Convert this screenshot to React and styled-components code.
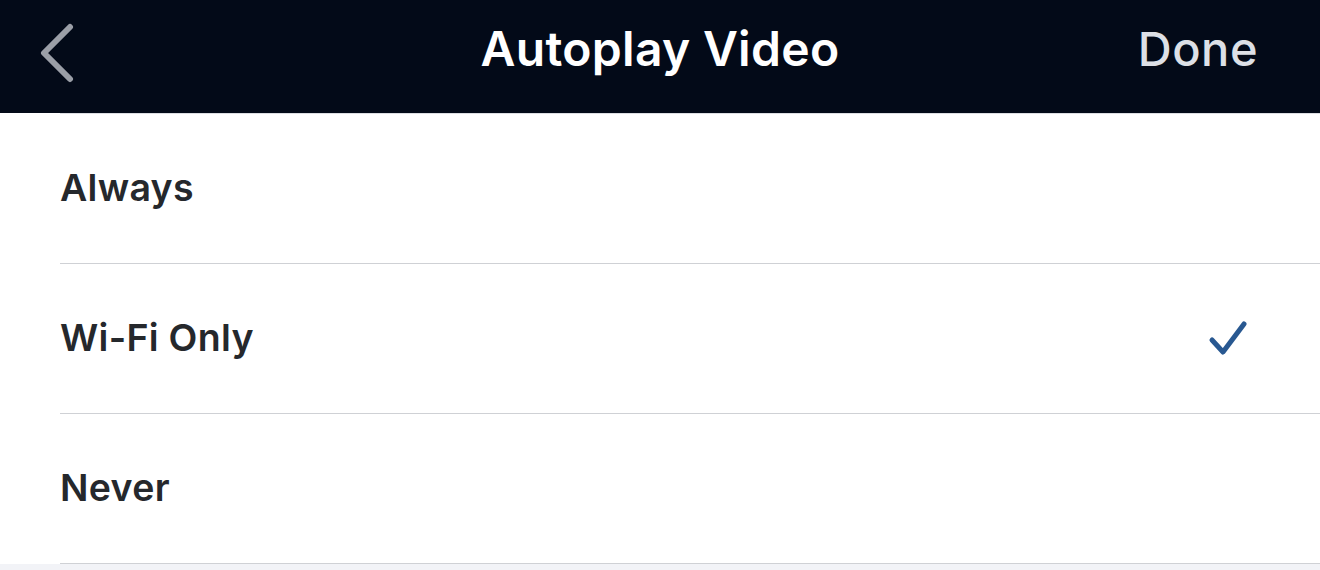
import * as React from "react";
import styled, { createGlobalStyle } from "styled-components";

const GlobalStyle = createGlobalStyle`
  html, body {
    margin: 0;
    padding: 0;
    background: #f2f3f7;
    font-family: "Inter", "Liberation Sans", sans-serif;
  }
`;

const Screen = styled.div`
  width: 1320px;
  height: 570px;
  display: flex;
  flex-direction: column;
  background: #f2f3f7;
  overflow: hidden;
`;

const NavBar = styled.div`
  height: 113px;
  background: #030a18;
  display: grid;
  grid-template-columns: 1fr auto 1fr;
  align-items: center;
  padding: 0 62px 0 40px;
  flex-shrink: 0;
`;

const BackButton = styled.button`
  justify-self: start;
  background: none;
  border: 0;
  padding: 0;
  width: 36px;
  height: 60px;
  display: flex;
  align-items: center;
  cursor: pointer;
  margin-top: -8px;
`;

const Title = styled.h1`
  margin: 0;
  color: #ffffff;
  font-size: 48px;
  font-weight: 600;
  letter-spacing: 0.3px;
  margin-top: -16px;
  margin-left: 22px;
`;

const DoneButton = styled.button`
  justify-self: end;
  background: none;
  border: 0;
  padding: 0;
  color: #dde0e6;
  font-family: inherit;
  font-size: 47px;
  font-weight: 500;
  letter-spacing: 0.5px;
  margin-top: -16px;
  cursor: pointer;
`;

const List = styled.div`
  background: #ffffff;
  display: flex;
  flex-direction: column;
`;

const Row = styled.div`
  height: 149px;
  margin-left: 60px;
  padding-right: 70px;
  border-top: ${(p) => (p.$first ? "1px solid #dcdee2" : "0")};
  border-bottom: 1px solid #cfd1d5;
  display: flex;
  align-items: center;
  justify-content: space-between;
`;

const Label = styled.span`
  color: #25282c;
  font-size: 37.5px;
  font-weight: 600;
  letter-spacing: 0.3px;
  margin-top: -2px;
`;

const Check = () => (
  <svg width="42" height="40" viewBox="0 0 42 40">
    <path
      d="M4 21 L15 33 L36 5"
      fill="none"
      stroke="#285891"
      strokeWidth="5"
      strokeLinecap="round"
      strokeLinejoin="round"
    />
  </svg>
);

const Chevron = () => (
  <svg width="36" height="60" viewBox="0 0 36 60">
    <path
      d="M30 4 L4 30 L30 56"
      fill="none"
      stroke="#9b9fa7"
      strokeWidth="6"
      strokeLinecap="round"
      strokeLinejoin="round"
    />
  </svg>
);

const options = ["Always", "Wi-Fi Only", "Never"];

function App() {
  const selected = "Wi-Fi Only";
  return (
    <Screen>
      <GlobalStyle />
      <NavBar>
        <BackButton aria-label="Back">
          <Chevron />
        </BackButton>
        <Title>Autoplay Video</Title>
        <DoneButton>Done</DoneButton>
      </NavBar>
      <List>
        {options.map((o, i) => (
          <Row key={o} $first={i === 0}>
            <Label>{o}</Label>
            {o === selected && <Check />}
          </Row>
        ))}
      </List>
    </Screen>
  );
}

export default App;
